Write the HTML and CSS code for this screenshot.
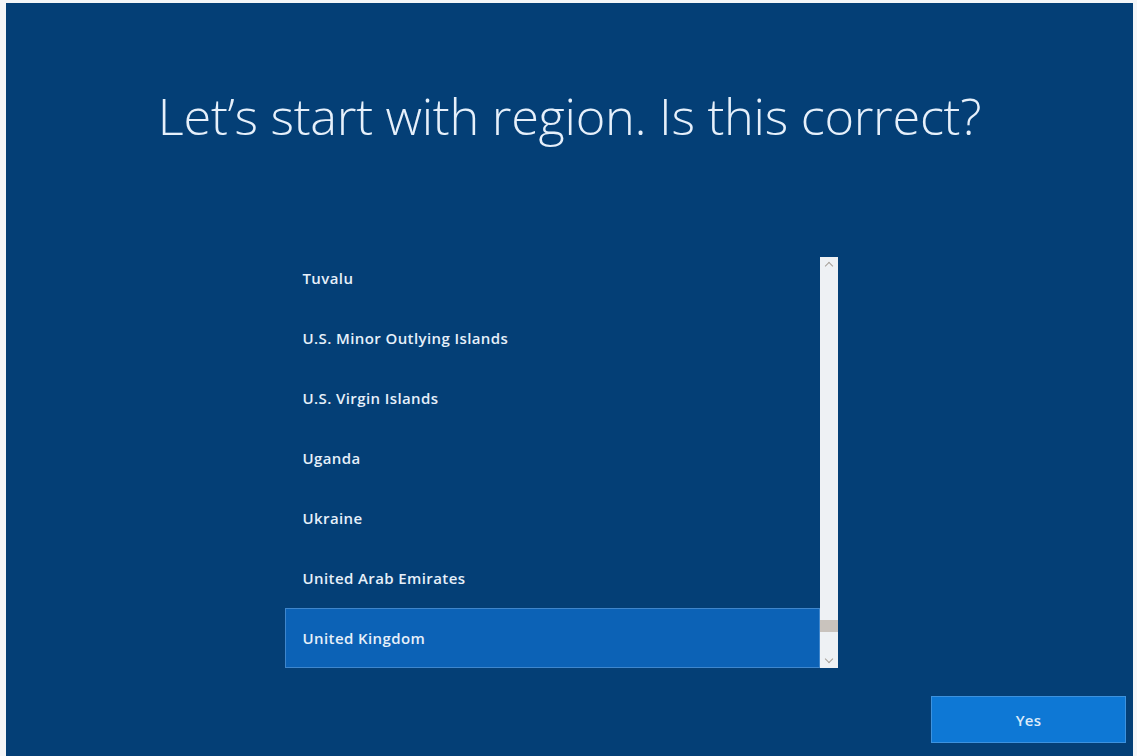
FILE: index.html
```html
<!DOCTYPE html>
<html lang="en">
<head>
    <meta charset="UTF-8">
    <meta name="viewport" content="width=device-width, initial-scale=1.0">
    <title>Region</title>
    <link rel="stylesheet" href="styles.css">
</head>
<body>
    <div class="screen">
        <h1 class="title">Let’s start with region. Is this correct?</h1>

        <!-- Region picker with its own scrollbar -->
        <div class="picker">
            <ul class="region-list">
                <li>Tuvalu</li>
                <li>U.S. Minor Outlying Islands</li>
                <li>U.S. Virgin Islands</li>
                <li>Uganda</li>
                <li>Ukraine</li>
                <li>United Arab Emirates</li>
                <li class="selected">United Kingdom</li>
            </ul>
            <div class="scrollbar">
                <span class="arrow up"></span>
                <span class="track"><span class="thumb"></span></span>
                <span class="arrow down"></span>
            </div>
        </div>

        <div class="actions">
            <button class="btn-primary">Yes</button>
        </div>
    </div>
</body>
</html>
```

FILE: styles.css
```css
/* White frame around the setup screen */
html, body {
    height: 100%;
}
body {
    margin: 0;
    background-color: #f4f6f8;
    font-family: "Open Sans", "Noto Sans", sans-serif;
    overflow: hidden;
}
.screen {
    height: calc(100% - 3px);
    margin: 3px 4px 0 6px;
    background-color: #043f76;
    display: flex;
    flex-direction: column;
    align-items: center;
}
/* Big light heading */
.title {
    margin: 83px 0 0;
    font-weight: 300;
    font-size: 50.5px;
    line-height: 60px;
    color: #e6f0fb;
    letter-spacing: -0.3px;
}
/* List box */
.picker {
    display: flex;
    margin-top: 102px;
    margin-left: -17px;
}
.region-list {
    list-style: none;
    margin: 0;
    padding: 0;
    width: 535px;
}
.region-list li {
    height: 60px;
    line-height: 60px;
    padding-left: 18px;
    font-size: 15px;
    font-weight: 600;
    letter-spacing: 0.4px;
    color: #e6f0fa;
    box-sizing: border-box;
}
.region-list li.selected {
    background-color: #0c62b6;
    border: 1px solid #3f86cc;
    line-height: 58px;
    padding-left: 17px;
}
/* Light scrollbar on the right of the list */
.scrollbar {
    width: 18px;
    margin-top: 9px;
    height: 411px;
    background-color: #eef1f4;
    display: flex;
    flex-direction: column;
    align-items: center;
}
.arrow {
    height: 14px;
    width: 100%;
    position: relative;
}
.arrow::after {
    content: "";
    position: absolute;
    left: 6px;
    width: 5px;
    height: 5px;
    border-left: 1px solid #a7a19a;
    border-top: 1px solid #a7a19a;
}
.arrow.up::after {
    top: 6px;
    transform: rotate(45deg);
}
.arrow.down::after {
    top: 2px;
    transform: rotate(225deg);
}
.track {
    flex: 1;
    width: 100%;
    display: flex;
    flex-direction: column;
    justify-content: flex-end;
}
.thumb {
    height: 12px;
    margin-bottom: 22px;
    background-color: #c9c3bd;
}
/* Bottom right action */
.actions {
    align-self: stretch;
    display: flex;
    justify-content: flex-end;
    margin-top: 28px;
    padding-right: 7px;
}
.btn-primary {
    width: 195px;
    height: 47px;
    background-color: #0e78d5;
    border: 1px solid #3d92de;
    color: #dcebf9;
    font-family: "Open Sans", "Noto Sans", sans-serif;
    font-size: 15px;
    font-weight: 600;
    letter-spacing: 0.3px;
}
```
